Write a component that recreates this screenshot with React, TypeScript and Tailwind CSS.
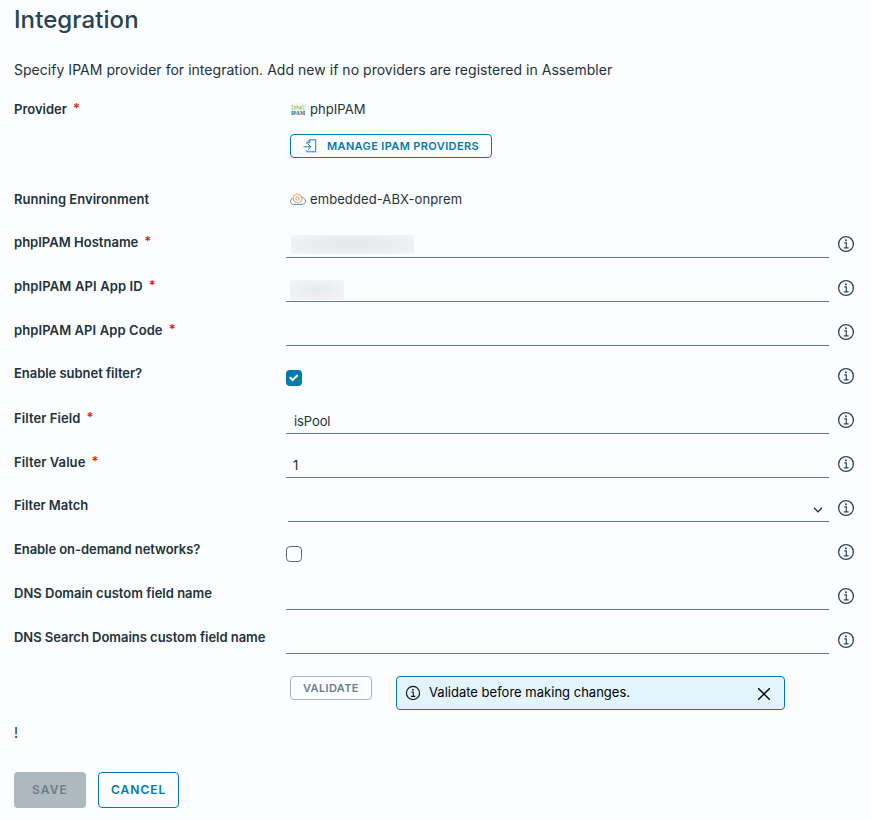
import React from "react";

function InfoIcon({ size, color }: { size: number; color: string }) {
  return (
    <svg width={size} height={size} viewBox="0 0 18 18" fill="none" stroke={color} className="shrink-0">
      <circle cx="9" cy="9" r="7.4" strokeWidth="1.3" />
      <circle cx="8.9" cy="5.3" r="1" fill={color} stroke="none" />
      <path d="M7.2 7.9h2.1v4.9M6.8 12.8h4.8" strokeWidth="1.2" />
    </svg>
  );
}

function Label({ text, required, spacing }: { text: string; required?: boolean; spacing: string }) {
  return (
    <div className="flex h-4 w-[272px] shrink-0 items-center whitespace-nowrap text-[13px] font-semibold leading-4 text-[#21333b]">
      <span className={spacing}>{text}</span>
      {required && <span className="ml-[6px] h-4 text-[13px] leading-[15px] text-[#e12200]">*</span>}
    </div>
  );
}

type RowProps = {
  label: string;
  spacing: string;
  required?: boolean;
  offset?: string;
  children: React.ReactNode;
};

function Row({ label, spacing, required, offset = "pt-3", children }: RowProps) {
  return (
    <div className="flex h-11">
      <div className={offset}>
        <Label text={label} spacing={spacing} required={required} />
      </div>
      <div className="w-[543px]">{children}</div>
      <div className="ml-2 pt-[13px]">
        <InfoIcon size={18} color="#314351" />
      </div>
    </div>
  );
}

function Field({ children }: { children?: React.ReactNode }) {
  return (
    <div className="flex h-9 items-end border-b border-[#647a85] text-[13px] leading-4 text-[#21333b]">
      {children}
    </div>
  );
}

export default function App() {
  return (
    <div className="flex h-[820px] w-[871px] flex-col overflow-hidden bg-[#fcfdff] pl-[14px] font-['Inter',sans-serif] text-[#21333b]">
      <h1 className="h-[60px] pt-[6px] text-[24px] font-medium leading-7 tracking-[0.08px] text-[#2b434e]">
        <span>Integration</span>
      </h1>
      <p className="h-[41px] whitespace-nowrap text-[14px] leading-5 tracking-[0.032px]">
        <span>Specify IPAM provider for integration. Add new if no providers are registered in Assembler</span>
      </p>

      <div className="flex h-[90px]">
        <Label text="Provider" spacing="tracking-[0px]" required />
        <div className="pl-1">
          <div className="flex h-4 items-center">
            <svg width="16" height="16" viewBox="0 -1 16 16" className="mr-1 overflow-visible">
              <rect y="1" width="16" height="13" fill="#f7f9f3" />
              <text x="1" y="6.5" fontSize="6" fontWeight="700" fontFamily="Liberation Mono, monospace" textLength="14" lengthAdjust="spacingAndGlyphs" fill="#91c84a">[php]</text>
              <text x="1" y="12.6" fontSize="6.5" fontWeight="700" fontFamily="Liberation Serif, serif" textLength="14" lengthAdjust="spacingAndGlyphs" fill="#455964">IPAM</text>
            </svg>
            <span className="text-[13px] leading-4 tracking-[0.06px]">phpIPAM</span>
          </div>
          <button className="mt-[17px] flex h-6 w-[202px] items-center rounded-[4px] border border-[#0079ad] pl-3 text-[11px] font-semibold leading-4 text-[#0079ad]">
            <svg width="14" height="14" viewBox="0 0 14 14" fill="none" stroke="#0079ad" strokeWidth="0.9" className="mr-[10px] shrink-0">
              <path d="M3.8 5V3.6L6.5.8h6.2v12H3.8v-1.7M6.8.8v3H4M.5 7.8h7.3M5.2 5.2l2.7 2.6-2.7 2.6" />
            </svg>
            <span className="whitespace-nowrap tracking-[0.37px]">MANAGE IPAM PROVIDERS</span>
          </button>
        </div>
      </div>

      <div className="flex h-[31px]">
        <Label text="Running Environment" spacing="tracking-[0.03px]" />
        <div className="flex h-4 items-center pl-1">
          <svg width="16" height="13" viewBox="0 0 16 13" fill="none" className="mr-1">
            <path d="M3.7 5.3C1.6 5.4.5 6.8.5 8.4c0 1.8 1.3 3 3 3h8.8c1.9 0 3.2-1.4 3.2-3.3 0-2-1.5-3.4-3.5-3.4" stroke="#4f8fca" />
            <path d="m7 .6 1.2 1 1.6-.2.5 1.5 1.5.7-.4 1.5.8 1.3-1.1 1.1-.1 1.5-1.6.3-1.2 1-1.3-.9-1.5.2-.7-1.4-1.4-.7.3-1.5-.8-1.4 1.2-1 .2-1.6 1.5-.1Z" stroke="#f39b52" />
            <circle cx="7.4" cy="5.5" r="1.7" stroke="#f39b52" />
          </svg>
          <span className="whitespace-nowrap text-[13px] leading-4 tracking-[0.09px]">embedded-ABX-onprem</span>
        </div>
      </div>

      <Row label="phpIPAM Hostname" spacing="tracking-[0.02px]" required>
        <Field>
          <div className="mb-[3px] ml-[5px] h-[19px] w-[123px] bg-[radial-gradient(ellipse_at_center,#e5e9e9_20%,#f3f5f6_100%)]" />
        </Field>
      </Row>
      <Row label="phpIPAM API App ID" spacing="tracking-[0.13px]" required>
        <Field>
          <div className="mb-px ml-1 h-5 w-[54px] bg-[radial-gradient(ellipse_at_center,#e9ebec_20%,#f4f5f6_100%)]" />
        </Field>
      </Row>
      <Row label="phpIPAM API App Code" spacing="tracking-[0.09px]" required>
        <Field />
      </Row>
      <Row label="Enable subnet filter?" spacing="tracking-[-0.04px]" offset="pt-[11px]">
        <div className="mt-4 flex size-4 items-center justify-center rounded-[4px] bg-[#0079ad]">
          <svg width="12" height="12" viewBox="0 0 12 12" fill="none" stroke="#fff" strokeWidth="2.1">
            <path d="m1.8 5.3 2.8 2.7 5.2-5" />
          </svg>
        </div>
      </Row>
      <Row label="Filter Field" spacing="tracking-[0.08px]" required>
        <Field><span className="mb-1 ml-2 tracking-[-0.1px]">isPool</span></Field>
      </Row>
      <Row label="Filter Value" spacing="tracking-[0.08px]" required>
        <Field><span className="mb-1 ml-[7px]">1</span></Field>
      </Row>
      <Row label="Filter Match" spacing="tracking-[-0.05px]" offset="pt-[11px]">
        <div className="ml-[2px]">
          <Field>
            <svg width="10" height="6" viewBox="0 0 10 6" fill="none" stroke="#21333b" strokeWidth="1.3" className="mb-2 ml-auto mr-[6px]">
              <path d="m1 .8 4 4 4-4" />
            </svg>
          </Field>
        </div>
      </Row>
      <Row label="Enable on-demand networks?" spacing="tracking-[-0.07px]" offset="pt-[11px]">
        <div className="mt-4 size-4 rounded-[4px] border border-[#566f7b]" />
      </Row>
      <Row label="DNS Domain custom field name" spacing="tracking-[0px]" offset="pt-[11px]">
        <Field />
      </Row>
      <Row label="DNS Search Domains custom field name" spacing="tracking-[-0.03px]" offset="pt-[11px]">
        <Field />
      </Row>

      <div className="flex h-[63px] items-start pl-[276px] pt-[14px]">
        <button className="flex h-6 w-[82px] items-center rounded-[4px] border border-[#a9b6be] pl-3 text-[11px] font-semibold leading-4 text-[#6d7f88]">
          <span className="tracking-[0.37px]">VALIDATE</span>
        </button>
        <div className="ml-6 flex h-[34px] w-[389px] items-center rounded-[4px] border border-[#0079ad] bg-[#e3f5fc] pl-2 pr-[13px] text-black">
          <InfoIcon size={16} color="#111111" />
          <span className="-mt-0.5 ml-2 whitespace-nowrap text-[13px] leading-4 tracking-[0.01px]">Validate before making changes.</span>
          <svg width="14" height="14" viewBox="0 0 14 14" stroke="#000" strokeWidth="1.4" className="ml-auto mt-[2px]">
            <path d="m1.2 1.2 11.6 11.6M12.8 1.2 1.2 12.8" />
          </svg>
        </div>
      </div>

      <div className="h-[47px] text-[14px] leading-4">!</div>
      <div className="flex gap-3">
        <button className="flex h-9 w-[72px] items-center rounded-[4px] bg-[#adb8bf] pl-[18px] text-[12px] font-semibold leading-4 text-[#6a7d86]">
          <span className="tracking-[1.1px]">SAVE</span>
        </button>
        <button className="flex h-9 w-[81px] items-center rounded-[4px] border border-[#0079ad] pl-3 text-[12px] font-semibold leading-4 text-[#0079ad]">
          <span className="tracking-[1px]">CANCEL</span>
        </button>
      </div>
    </div>
  );
}
